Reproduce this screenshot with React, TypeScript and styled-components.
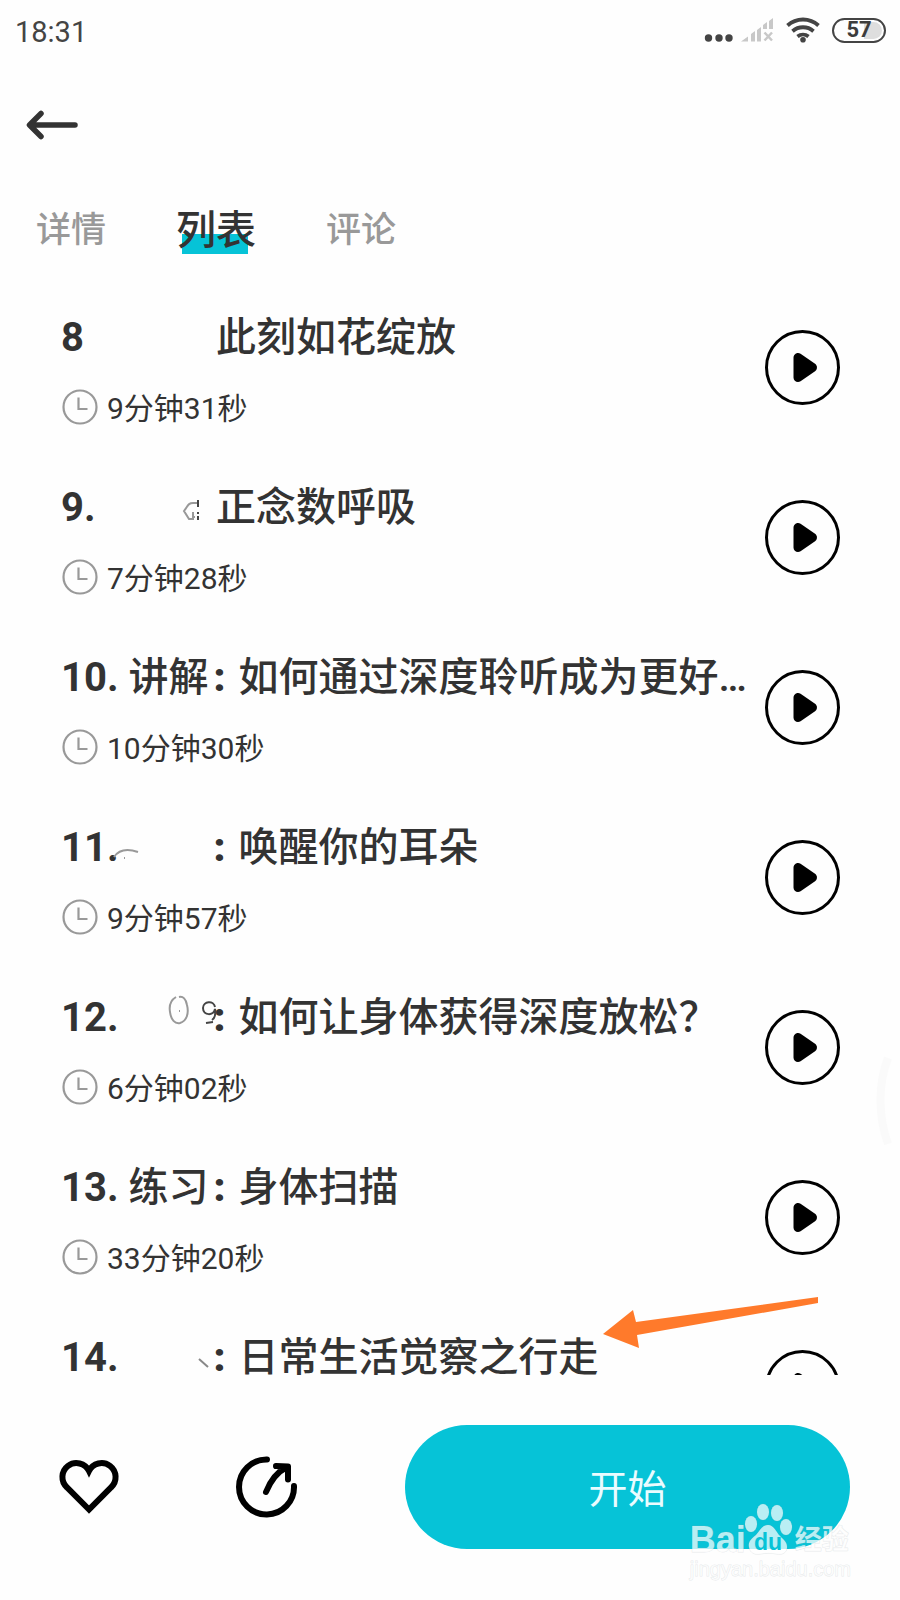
import React from "react";
import styled, { createGlobalStyle } from "styled-components";

const TEAL = "#06c3d7";
const INK = "#333333";

const GlobalStyle = createGlobalStyle`
  *, *::before, *::after { box-sizing: border-box; }
  body {
    margin: 0;
    background: #fefefe;
    color: ${INK};
    font-family: Roboto, "Noto Sans CJK SC", sans-serif;
  }
  button { font: inherit; color: inherit; background: none; border: 0; padding: 0; cursor: pointer; }
  svg { display: block; overflow: visible; }
`;

const Screen = styled.div`
  position: relative;
  display: flex;
  flex-direction: column;
  height: 100vh;
  overflow: hidden;
`;

const StatusBar = styled.div`
  display: flex;
  align-items: center;
  justify-content: space-between;
  height: 60px;
  padding: 0 14px 0 15px;
`;

const Clock = styled.time`
  padding-top: 4px;
  font-size: 29px;
  line-height: 36px;
  color: #444;
`;

const StatusIcons = styled.div`
  display: flex;
  align-items: center;
  gap: 12px;
`;

const MoreDots = styled.svg`
  margin-right: -4px;
`;

const Battery = styled.span`
  display: flex;
  align-items: center;
  justify-content: center;
  width: 54px;
  height: 25px;
  border: 2px solid #444;
  border-radius: 13px;
  background: linear-gradient(to right, #fefefe 60%, #dedede 60%);
  background-clip: content-box;
  padding: 2px;
  font-size: 22px;
  line-height: 20px;
  font-weight: 700;
  color: #3c3c3c;
`;

const NavBar = styled.header`
  display: flex;
  align-items: center;
  height: 130px;
  padding: 0 24px;
`;

const Tabs = styled.div`
  display: flex;
  align-items: center;
  gap: 70px;
  height: 92px;
  padding: 0 36px 10px;
`;

const Tab = styled.button<{ $active?: boolean }>`
  position: relative;
  font-size: ${(p) => (p.$active ? 40 : 35)}px;
  line-height: 48px;
  font-weight: 500;
  color: ${(p) => (p.$active ? INK : "#999")};
`;

const TabMark = styled.span`
  position: absolute;
  left: 6px;
  right: 8px;
  bottom: 1px;
  height: 20px;
  background: ${TEAL};
  z-index: -1;
`;

const TrackList = styled.ol`
  flex: 1;
  min-height: 0;
  margin: 0;
  padding: 0 60px 0 61px;
  list-style: none;
  overflow-y: auto;
  scrollbar-width: none;
`;

const Track = styled.li`
  position: relative;
  display: flex;
  align-items: center;
  justify-content: space-between;
  height: 170px;
`;

const TrackText = styled.div`
  display: flex;
  flex-direction: column;
  gap: 22px;
`;

const TrackTitle = styled.h2`
  display: flex;
  margin: 0;
  font-size: 40px;
  line-height: 62px;
  font-weight: 500;
  white-space: nowrap;
`;

const Index = styled.span`
  min-width: 35px;
  margin-right: 10px;
  font-weight: 700;
`;

const Kind = styled.span`
  position: relative;
  width: 80px;
`;

const Colon = styled.span`
  width: 30px;
  padding-left: 5px;
  font-weight: 900;
`;

const Residue = styled.svg`
  position: absolute;
  top: 4px;
  left: -20px;
`;

const Duration = styled.div`
  display: flex;
  align-items: center;
  gap: 8px;
  font-size: 30px;
  line-height: 36px;
`;

const PlayButton = styled.button`
  position: absolute;
  right: 0;
`;

const Pointer = styled.svg`
  position: absolute;
  right: 20px;
  top: -7px;
`;

const ActionBar = styled.footer`
  position: relative;
  display: flex;
  align-items: center;
  padding: 50px 50px 51px 58px;
`;

const Actions = styled.div`
  display: flex;
  flex: 1;
  gap: 114px;
`;

const StartButton = styled.button`
  flex: 0 0 445px;
  height: 124px;
  padding-top: 6px;
  border-radius: 62px;
  background: ${TEAL};
  color: #eafcff;
  font-size: 39px;
  line-height: 48px;
`;

const Watermark = styled.div`
  position: absolute;
  right: 49px;
  bottom: 18px;
  color: rgba(255, 255, 255, 0.72);
  font-family: "Liberation Sans", "Noto Sans CJK SC", sans-serif;
  -webkit-text-stroke: 1px rgba(150, 165, 170, 0.22);
  paint-order: stroke fill;
  pointer-events: none;
`;

const Brand = styled.div`
  display: flex;
  align-items: flex-end;
  height: 54px;
  font-weight: 700;
`;

const BrandLatin = styled.span`
  font-size: 36px;
  line-height: 32px;
`;

const BrandHan = styled.span`
  padding-left: 1px;
  font-size: 27px;
  line-height: 32px;
`;

const Site = styled.div`
  font-size: 20px;
  line-height: 26px;
`;

const EdgeHandle = styled.svg`
  position: absolute;
  right: 7px;
  top: 66%;
`;

type TrackData = {
  index: string;
  kind?: string;
  colon?: boolean;
  name: string;
  time: string;
  residue?: React.ReactNode;
};

const tracks: TrackData[] = [
  { index: "8", name: "此刻如花绽放", time: "9分钟31秒" },
  {
    index: "9.",
    name: "正念数呼吸",
    time: "7分钟28秒",
    residue: (
      <g strokeWidth="2">
        <path d="M111 22h-4c-5 0-5 3-9 8l5 8h5M107 31v5h2" stroke="#999" />
        <path d="M112 19v7M112 31v2M112 35v4" stroke="#444" />
      </g>
    ),
  },
  { index: "10.", kind: "讲解", colon: true, name: "如何通过深度聆听成为更好…", time: "10分钟30秒" },
  {
    index: "11.",
    colon: true,
    name: "唤醒你的耳朵",
    time: "9分钟57秒",
    residue: <path d="M5 36c6-9 15-8 24-5M15 37h1" stroke="#999" strokeWidth="2" />,
  },
  {
    index: "12.",
    colon: true,
    name: "如何让身体获得深度放松？",
    time: "6分钟02秒",
    residue: (
      <g strokeWidth="2">
        <path d="M67 6c-5 3-7 9-6 15 1 8 5 12 10 11 7-2 9-10 7-18-1-6-4-9-8-8" stroke="#999" />
        <path d="M70 20h1" stroke="#999" />
        <path d="M106 16c-1-7-12-6-12 1 0 8 11 8 12 1 1 6 0 9-3 11M97 32l7-1" stroke="#444" />
      </g>
    ),
  },
  { index: "13.", kind: "练习", colon: true, name: "身体扫描", time: "33分钟20秒" },
  {
    index: "14.",
    colon: true,
    name: "日常生活觉察之行走",
    time: "12分钟16秒",
    residue: <path d="M90 28l9 8" stroke="#888" strokeWidth="2" />,
  },
];

const ClockIcon = () => (
  <svg width="38" height="36" viewBox="0 0 38 36" fill="none" stroke="#999" strokeWidth="2.200" aria-hidden="true">
    <circle cx="19" cy="16" r="16.500" />
    <path d="M17.500 6.500v11.500h9" />
  </svg>
);

const PlayIcon = () => (
  <svg width="75" height="75" viewBox="0 0 75 75" aria-hidden="true">
    <circle cx="37.500" cy="37.500" r="36" fill="none" stroke="#000" strokeWidth="3" />
    <path d="M33 27.500v20l14.500-10z" fill="#000" stroke="#000" strokeWidth="9" strokeLinejoin="round" />
  </svg>
);

const TrackRow = ({ track, children }: { track: TrackData; children?: React.ReactNode }) => (
  <Track>
    <TrackText>
      <TrackTitle>
        <Index>{track.index}</Index>
        <Kind>
          {track.kind}
          {track.residue && (
            <Residue width="120" height="50" viewBox="0 0 120 50" fill="none" aria-hidden="true">
              {track.residue}
            </Residue>
          )}
        </Kind>
        <Colon>{track.colon ? ":" : ""}</Colon>
        <span>{track.name}</span>
      </TrackTitle>
      <Duration>
        <ClockIcon />
        {track.time}
      </Duration>
    </TrackText>
    <PlayButton aria-label="播放">
      <PlayIcon />
    </PlayButton>
    {children}
  </Track>
);

const SignalIcon = () => (
  <svg width="34" height="26" viewBox="0 0 34 26" fill="#c8c8c8" aria-hidden="true">
    <path d="M1 24.500l7-5v5zM11 17l4-3v10.500h-4zM17 13l4-3v14.500h-4zM23 8l4-3v7h-4zM29 4l4-3v11h-4z" />
    <path d="M24.500 15.500l7.500 8M32 15.500l-7.500 8" stroke="#c8c8c8" strokeWidth="2.500" />
  </svg>
);

const WifiIcon = () => (
  <svg width="34" height="26" viewBox="0 0 34 26" fill="none" stroke="#444" strokeWidth="3.800" aria-hidden="true">
    <path d="M1.500 8.500a23 23 0 0 1 31 0M6.500 14.200a16 16 0 0 1 21 0M11.500 19.500a9 9 0 0 1 11 0" />
    <circle cx="17" cy="22.700" r="2.800" fill="#444" stroke="none" />
  </svg>
);

const PawIcon = () => (
  <svg width="48" height="54" viewBox="0 0 48 54" fill="rgba(255,255,255,0.72)" aria-hidden="true">
    <g stroke="rgba(150,165,170,0.22)">
      <ellipse cx="5" cy="22" rx="6" ry="8" />
      <ellipse cx="17" cy="10" rx="6" ry="8" />
      <ellipse cx="31" cy="11" rx="6" ry="8" />
      <ellipse cx="40" cy="25" rx="6" ry="8" />
      <path d="M22 23c-6 0-8 6-12 10-5 4-8 7-7 12 1 6 6 8 11 7 6-1 11-1 17 0 5 1 10-1 10-7 0-5-3-7-7-11-4-4-6-11-12-11z" />
    </g>
    <text x="22" y="48" textAnchor="middle" fontSize="23" fontWeight="700" fill={TEAL} stroke="none">
      du
    </text>
  </svg>
);

export default function App() {
  return (
    <Screen>
      <GlobalStyle />
      <StatusBar>
        <Clock>18:31</Clock>
        <StatusIcons>
          <MoreDots width="28" height="26" viewBox="0 0 28 26" fill="#444" aria-hidden="true">
            <circle cx="4.500" cy="21" r="3.700" />
            <circle cx="15" cy="21" r="3.700" />
            <circle cx="25" cy="21" r="3.700" />
          </MoreDots>
          <SignalIcon />
          <WifiIcon />
          <Battery>57</Battery>
        </StatusIcons>
      </StatusBar>
      <NavBar>
        <button aria-label="返回">
          <svg
            width="56"
            height="36"
            viewBox="0 0 56 36"
            fill="none"
            stroke={INK}
            strokeWidth="5.500"
            strokeLinecap="round"
            strokeLinejoin="round"
          >
            <path d="M51 18H6M17 6.500L5.500 18 17 29.500" />
          </svg>
        </button>
      </NavBar>
      <Tabs role="tablist">
        <Tab role="tab" aria-selected={false}>详情</Tab>
        <Tab role="tab" aria-selected $active>
          <TabMark />
          列表
        </Tab>
        <Tab role="tab" aria-selected={false}>评论</Tab>
      </Tabs>
      <TrackList>
        {tracks.map((track, i) => (
          <TrackRow key={track.index} track={track}>
            {i === tracks.length - 1 && (
              <Pointer width="218" height="56" viewBox="0 0 218 56" fill="#ff7a2b" aria-hidden="true">
                <path d="M1 39L31 15l3 12L216 2v6L35 40l2 13z" />
              </Pointer>
            )}
          </TrackRow>
        ))}
      </TrackList>
      <ActionBar>
        <Actions>
          <button aria-label="收藏">
            <svg width="62" height="62" viewBox="0 0 62 62" fill="none" stroke="#000" strokeWidth="6">
              <path d="M31 53.500L9 31.500A14 14 0 1 1 31 15A14 14 0 1 1 53 31.500z" />
            </svg>
          </button>
          <button aria-label="分享">
            <svg
              width="64"
              height="62"
              viewBox="0 0 64 62"
              fill="none"
              stroke="#000"
              strokeWidth="6"
              strokeLinecap="round"
              strokeLinejoin="round"
            >
              <path d="M33 3.500A27.500 27.500 0 1 0 60 30" />
              <path d="M32 36C36 26 43 16 53 11M42 10l12 .500v13" />
            </svg>
          </button>
        </Actions>
        <StartButton>开始</StartButton>
        <Watermark>
          <Brand>
            <BrandLatin>Bai</BrandLatin>
            <PawIcon />
            <BrandHan>经验</BrandHan>
          </Brand>
          <Site>jingyan.baidu.com</Site>
        </Watermark>
      </ActionBar>
      <EdgeHandle width="18" height="90" viewBox="0 0 18 90" fill="none" stroke="#fafafa" strokeWidth="8" aria-hidden="true">
        <path d="M13 2C3 28 3 60 13 88" />
      </EdgeHandle>
    </Screen>
  );
}
